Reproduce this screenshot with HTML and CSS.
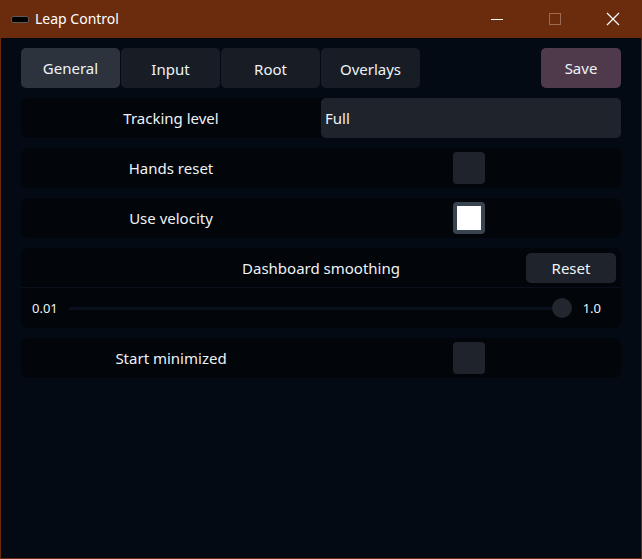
FILE: index.html
```html
<!DOCTYPE html>
<html>
<head>
<meta charset="utf-8">
<link rel="stylesheet" href="styles.css">
</head>
<body>
<div class="window">
  <div class="titlebar">
    <div class="app-icon"></div>
    <div class="title">Leap Control</div>
    <div class="controls">
      <div class="ctl"><svg width="14" height="14" viewBox="0 0 14 14"><line x1="1" y1="7.5" x2="13" y2="7.5" stroke="#ffffff" stroke-width="1"/></svg></div>
      <div class="ctl"><svg width="14" height="14" viewBox="0 0 14 14"><rect x="1.5" y="1.5" width="11" height="11" fill="none" stroke="#9a6a55" stroke-width="1"/></svg></div>
      <div class="ctl"><svg width="14" height="14" viewBox="0 0 14 14"><path d="M1 1 L13 13 M13 1 L1 13" stroke="#ffffff" stroke-width="1.2"/></svg></div>
    </div>
  </div>
  <div class="content">
    <div class="tabbar">
      <div class="tabs">
        <div class="tab active">General</div>
        <div class="tab">Input</div>
        <div class="tab">Root</div>
        <div class="tab">Overlays</div>
      </div>
      <div class="save">Save</div>
    </div>

    <div class="row split">
      <div class="label">Tracking level</div>
      <div class="combo">Full</div>
    </div>

    <div class="row split">
      <div class="label">Hands reset</div>
      <div class="cell"><div class="check"></div></div>
    </div>

    <div class="row split">
      <div class="label">Use velocity</div>
      <div class="cell"><div class="check on"></div></div>
    </div>

    <div class="row block">
      <div class="block-head">
        <div class="block-title">Dashboard smoothing</div>
        <div class="reset">Reset</div>
      </div>
      <div class="slider">
        <span class="val">0.01</span>
        <div class="track"><div class="knob"></div></div>
        <span class="val">1.0</span>
      </div>
    </div>

    <div class="row split">
      <div class="label">Start minimized</div>
      <div class="cell"><div class="check"></div></div>
    </div>
  </div>
</div>
</body>
</html>
```

FILE: styles.css
```css
* { box-sizing: border-box; }
html, body { margin: 0; padding: 0; }
body {
  width: 642px;
  height: 559px;
  overflow: hidden;
  font-family: "Noto Sans", "Open Sans", sans-serif;
  color: #eef3f8;
}
.window {
  width: 642px;
  height: 559px;
  border: 1px solid #6b2c0d;
  border-top: none;
  display: flex;
  flex-direction: column;
  background: #040a13;
}
.titlebar {
  height: 38px;
  margin: 0 -1px;
  background: #6b2c0d;
  display: flex;
  align-items: center;
  padding-left: 11px;
}
.app-icon {
  width: 18px;
  height: 7px;
  background: #000;
  border: 1px solid #5a5a5a;
  border-radius: 2px;
  margin-right: 6px;
}
.title {
  font-size: 14px;
  color: #ffffff;
  flex: 1;
  margin-top: -1px;
}
.controls { display: flex; height: 38px; }
.ctl {
  width: 58px;
  display: flex;
  align-items: center;
  justify-content: center;
}
.content {
  flex: 1;
  padding: 10px 20px 0 20px;
  display: flex;
  flex-direction: column;
  gap: 10px;
}
.tabbar {
  display: flex;
  justify-content: space-between;
  height: 40px;
}
.tabs { display: flex; gap: 1px; }
.tab {
  width: 99px;
  background: #181d25;
  border-radius: 5px;
  display: flex;
  align-items: center;
  justify-content: center;
  font-size: 15px;
  padding-top: 2px;
}
.tab.active { background: #2d333d; padding-top: 0; }
.save {
  width: 80px;
  background: #4f3a4b;
  border-radius: 5px;
  display: flex;
  align-items: center;
  justify-content: center;
  font-size: 15px;
}
.row {
  background: #020509;
  border-radius: 7px;
}
.split {
  height: 40px;
  display: grid;
  grid-template-columns: 300px 300px;
}
.label {
  display: flex;
  align-items: center;
  justify-content: center;
  font-size: 15px;
}
.combo {
  background: #1f232b;
  border-radius: 5px;
  display: flex;
  align-items: center;
  padding-left: 4px;
  font-size: 15px;
}
.cell {
  display: flex;
  align-items: center;
  padding-left: 132px;
}
.check {
  width: 32px;
  height: 32px;
  border-radius: 4px;
  background: #1f232b;
}
.check.on {
  background: #ffffff;
  border: 4px solid #3a4450;
}
.block { height: 80px; display: flex; flex-direction: column; }
.block-head {
  height: 40px;
  position: relative;
  display: flex;
  align-items: center;
  justify-content: center;
  border-bottom: 1px solid #07101a;
  font-size: 15px;
}
.reset {
  position: absolute;
  right: 5px;
  top: 5px;
  width: 90px;
  height: 30px;
  background: #1f232b;
  border-radius: 5px;
  display: flex;
  align-items: center;
  justify-content: center;
}
.slider {
  flex: 1;
  display: flex;
  align-items: center;
  padding: 0 20px 0 11px;
  gap: 11px;
}
.val { font-size: 13px; }
.track {
  flex: 1;
  height: 3px;
  background: #07101c;
  position: relative;
}
.knob {
  position: absolute;
  right: 0;
  top: -9px;
  width: 20px;
  height: 20px;
  border-radius: 50%;
  background: #22262e;
}
```
